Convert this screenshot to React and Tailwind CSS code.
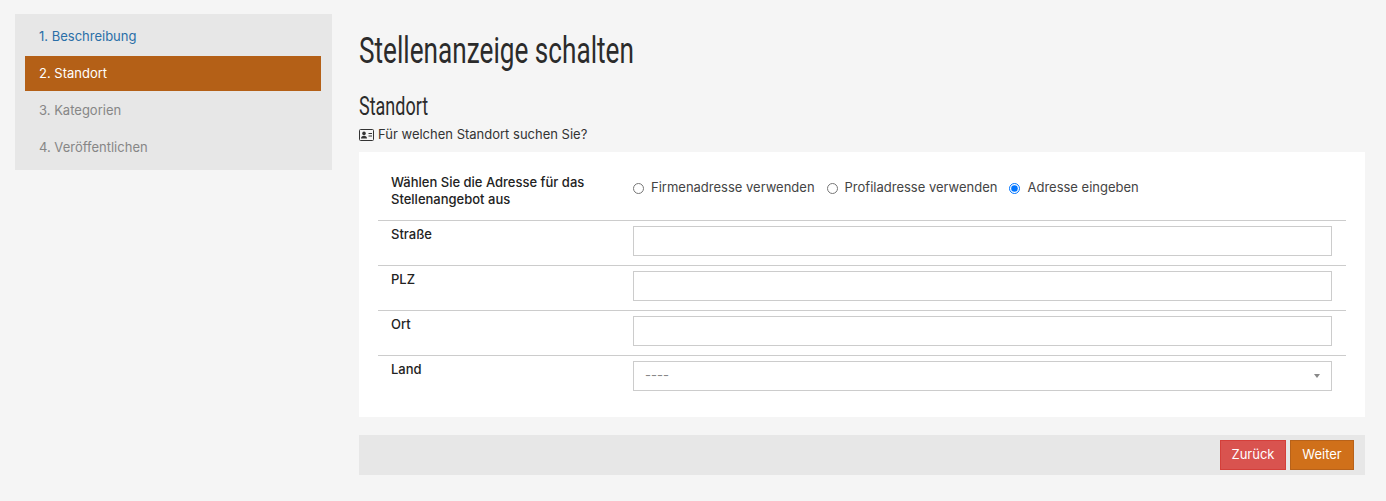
const body = { fontFamily: '"Inter", "Open Sans", sans-serif' };
const head = { fontFamily: 'Roboto, "Liberation Sans", sans-serif' };

function IdIcon() {
  return (
    <svg width="15" height="12" viewBox="0 0 15 12" className="shrink-0" fill="none">
      <rect x="0.5" y="0.5" width="14" height="11" rx="1" stroke="#333" />
      <circle cx="5" cy="4.4" r="1.8" fill="#333" />
      <path d="M2 9.4c0-1.8 1.3-2.6 3-2.6s3 .8 3 2.6z" fill="#333" />
      <path d="M9.5 4.5h3.5M9.5 7h3.5" stroke="#333" />
    </svg>
  );
}

function MenuItem({ children, className }) {
  return (
    <li className={`h-[35px] pl-[14px] flex items-center text-[13px] ${className}`}>{children}</li>
  );
}

function Row({ label, children }) {
  return (
    <div className="h-[45px] flex border-t border-[#ccc] pl-[13px] pr-[14px] pt-[5px]">
      <label className="w-[242px] text-[13px] leading-[17px] font-medium text-[#222]">{label}</label>
      <div className="flex-1">{children}</div>
    </div>
  );
}

function TextInput() {
  return <input type="text" className="block w-full h-[30px] bg-white border border-[#ccc] outline-none" />;
}

function Radio({ label, checked, className }) {
  return (
    <label className={`flex items-center gap-[7px] ${className}`}>
      <input type="radio" name="adresse" defaultChecked={checked} className="m-0 w-[11px] h-[11px] accent-[#0075ff]" />
      {label}
    </label>
  );
}

export default function App() {
  return (
    <div className="min-h-[501px] bg-[#f5f5f5] flex items-start pl-[15px] pr-[21px] pt-[14px] text-[#333]" style={body}>
      <ul className="w-[317px] shrink-0 bg-[#e7e7e7] pl-[10px] pr-[11px] py-[5px] flex flex-col gap-[2px]">
        <MenuItem className="text-[#2a6fa8]">1. Beschreibung</MenuItem>
        <MenuItem className="bg-[#b46017] text-white">2. Standort</MenuItem>
        <MenuItem className="text-[#868686]">3. Kategorien</MenuItem>
        <MenuItem className="text-[#868686]">4. Veröffentlichen</MenuItem>
      </ul>

      <main className="flex-1 ml-[27px]">
        <h1 className="h-[66px] pt-[14px] text-[36px] leading-[46px] text-[#2b2b2b] origin-left scale-x-[0.727] whitespace-nowrap" style={head}>
          Stellenanzeige schalten
        </h1>
        <h2 className="mt-[13px] text-[25px] leading-[28px] text-[#2b2b2b] origin-left scale-x-[0.72]" style={head}>
          Standort
        </h2>
        <p className="mt-[5px] h-[18px] flex items-center gap-[4px] text-[13px]">
          <IdIcon /> Für welchen Standort suchen Sie?
        </p>

        <section className="mt-[8px] bg-white h-[265px] px-[19px]">
          <div className="h-[68px] flex items-center pl-[13px] pr-[14px]">
            <div className="w-[242px] mt-[9px] text-[13px] leading-[17px] font-medium text-[#222]">
              Wählen Sie die Adresse für das<br />Stellenangebot aus
            </div>
            <div className="flex text-[13px] text-[#444] mt-[4px]">
              <Radio label="Firmenadresse verwenden" />
              <Radio label="Profiladresse verwenden" className="ml-[12px]" />
              <Radio label="Adresse eingeben" checked className="ml-[12px]" />
            </div>
          </div>
          <Row label="Straße"><TextInput /></Row>
          <Row label="PLZ"><TextInput /></Row>
          <Row label="Ort"><TextInput /></Row>
          <Row label="Land">
            <div className="h-[30px] border border-[#ccc] flex items-center justify-between pl-[11px] pr-[11px] text-[13px] text-[#888]">
              <span>----</span>
              <span className="w-0 h-0 border-x-[3.5px] border-x-transparent border-t-[4px] border-t-[#888]" />
            </div>
          </Row>
        </section>

        <footer className="mt-[18px] h-[40px] bg-[#e7e7e7] flex items-center justify-end gap-[4px] pr-[11px]">
          <button className="h-[30px] w-[66px] bg-[#d9534f] border border-[#d43f3a] text-white text-[13px]">Zurück</button>
          <button className="h-[30px] w-[64px] bg-[#d0701a] border border-[#b8621a] text-white text-[13px]">Weiter</button>
        </footer>
      </main>
    </div>
  );
}
